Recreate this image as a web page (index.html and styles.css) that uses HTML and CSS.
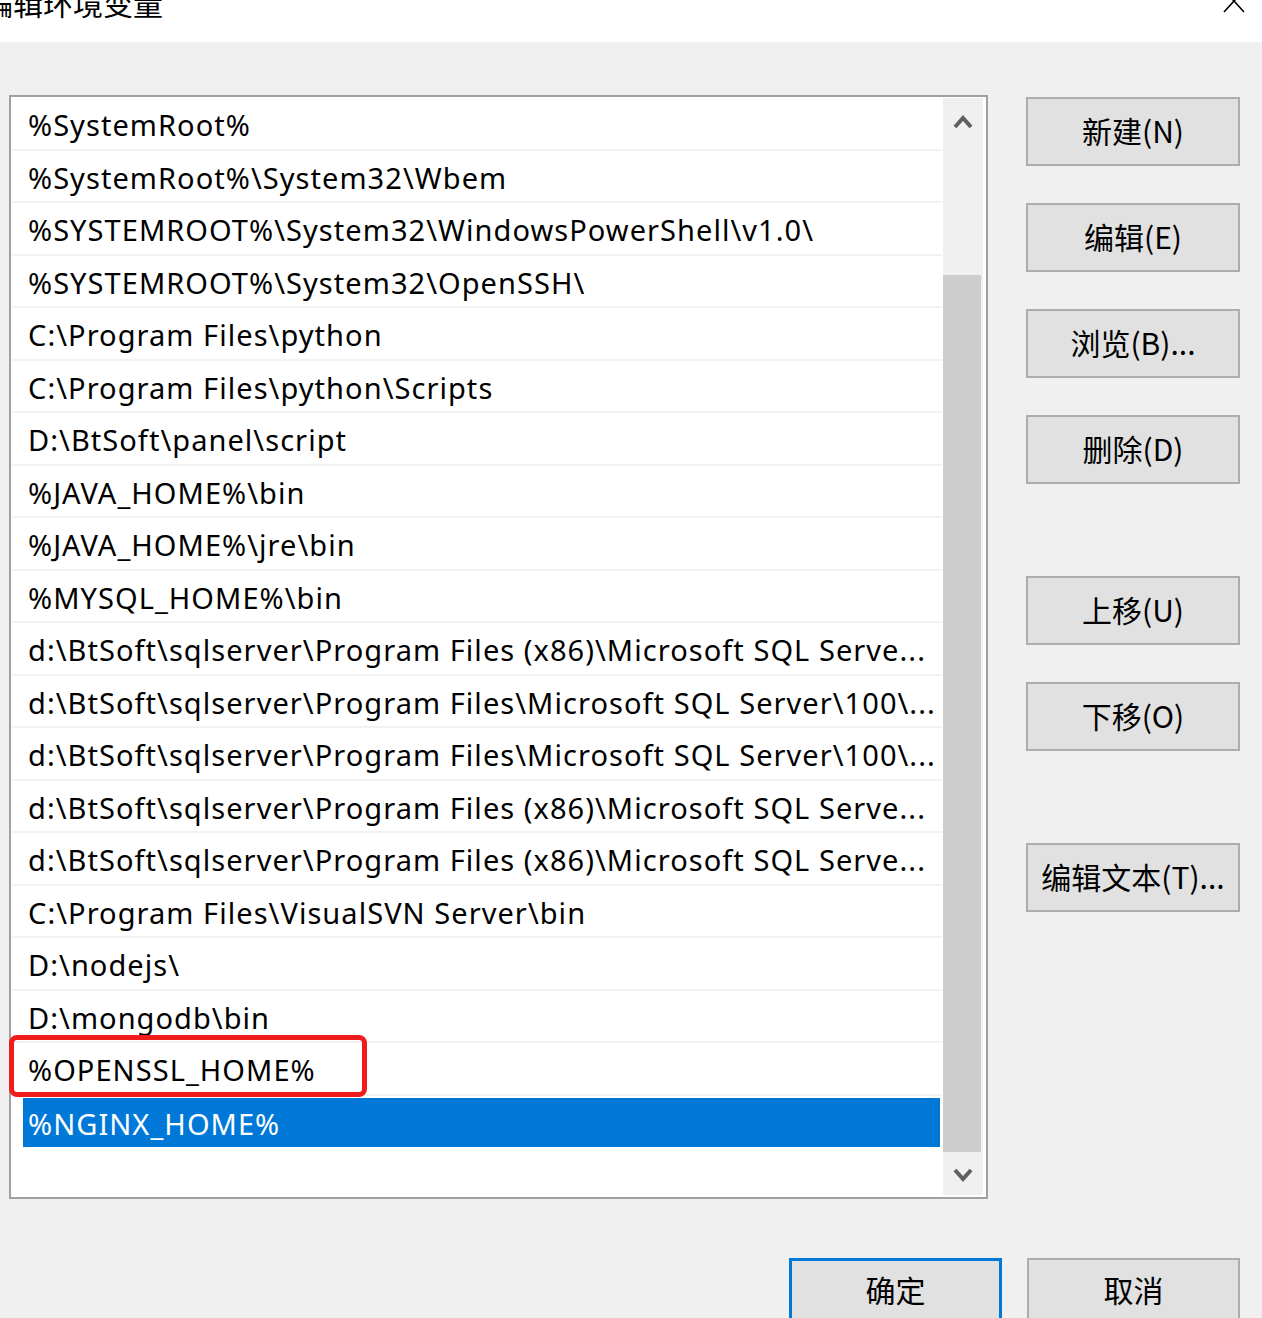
FILE: index.html
```html
<!DOCTYPE html>
<html>
<head lang="zh">
    <meta charset="UTF-8">
    <title>编辑环境变量</title>
    <link rel="stylesheet" href="styles.css">
</head>
<body>
<div class="titlebar">
    <span class="title">编辑环境变量</span>
    <svg class="close" width="22" height="24" viewBox="0 0 22 24">
        <path d="M1 1 L21 23 M21 1 L1 23" stroke="#000" stroke-width="1.6" fill="none"/>
    </svg>
</div>

<div class="main">
    <div class="listbox">
        <ul class="rows">
            <li>%SystemRoot%</li>
            <li>%SystemRoot%\System32\Wbem</li>
            <li>%SYSTEMROOT%\System32\WindowsPowerShell\v1.0\</li>
            <li>%SYSTEMROOT%\System32\OpenSSH\</li>
            <li>C:\Program Files\python</li>
            <li>C:\Program Files\python\Scripts</li>
            <li>D:\BtSoft\panel\script</li>
            <li>%JAVA_HOME%\bin</li>
            <li>%JAVA_HOME%\jre\bin</li>
            <li>%MYSQL_HOME%\bin</li>
            <li>d:\BtSoft\sqlserver\Program Files (x86)\Microsoft SQL Serve...</li>
            <li>d:\BtSoft\sqlserver\Program Files\Microsoft SQL Server\100\...</li>
            <li>d:\BtSoft\sqlserver\Program Files\Microsoft SQL Server\100\...</li>
            <li>d:\BtSoft\sqlserver\Program Files (x86)\Microsoft SQL Serve...</li>
            <li>d:\BtSoft\sqlserver\Program Files (x86)\Microsoft SQL Serve...</li>
            <li>C:\Program Files\VisualSVN Server\bin</li>
            <li>D:\nodejs\</li>
            <li>D:\mongodb\bin</li>
            <li class="marked">%OPENSSL_HOME%<span class="mark"></span></li>
            <li class="selected"><span>%NGINX_HOME%</span></li>
        </ul>
        <div class="scrollbar">
            <div class="sb-btn up">
                <svg width="20" height="14" viewBox="0 0 20 14"><polyline points="2,12 10,3 18,12" stroke="#606060" stroke-width="4" fill="none"/></svg>
            </div>
            <div class="sb-track"><div class="sb-thumb"></div></div>
            <div class="sb-btn down">
                <svg width="20" height="14" viewBox="0 0 20 14"><polyline points="2,2 10,11 18,2" stroke="#606060" stroke-width="4" fill="none"/></svg>
            </div>
        </div>
    </div>

    <div class="side">
        <button class="btn">新建(N)</button>
        <button class="btn">编辑(E)</button>
        <button class="btn">浏览(B)...</button>
        <button class="btn">删除(D)</button>
        <button class="btn sep">上移(U)</button>
        <button class="btn">下移(O)</button>
        <button class="btn sep">编辑文本(T)...</button>
    </div>
</div>

<div class="footer">
    <button class="btn default">确定</button>
    <button class="btn">取消</button>
</div>
</body>
</html>
```

FILE: styles.css
```css
* {
    margin: 0;
    padding: 0;
    box-sizing: border-box;
}

ul {
    list-style: none;
}

body {
    background-color: #f0f0f0;
    font-family: "Noto Sans", "Noto Sans CJK SC", sans-serif;
    color: #000;
    overflow: hidden;
}

.titlebar {
    height: 42px;
    background-color: #fff;
    display: flex;
    justify-content: space-between;
    overflow: hidden;
}

.title {
    font: 30px/30px "Noto Sans CJK SC", sans-serif;
    margin-top: -13px;
    margin-left: -17px;
}

.close {
    margin-top: -11px;
    margin-right: 17px;
}

.main {
    display: flex;
    padding: 53px 0 0 9px;
}

.listbox {
    width: 979px;
    height: 1104px;
    border: 2px solid #a0a0a0;
    background-color: #fff;
    display: flex;
    padding: 1px 3px 2px 1px;
}

.rows {
    width: 930px;
    margin-right: 1px;
}

.rows li {
    position: relative;
    height: 52.5px;
    line-height: 48px;
    padding: 3px 0 0 16px;
    font-size: 29px;
    letter-spacing: 1.05px;
    white-space: nowrap;
    border-bottom: 2px solid #f2f2f2;
}

.rows li.selected {
    border-bottom: none;
    padding: 2.5px 2px 1px 11px;
}

.selected span {
    display: block;
    height: 49px;
    line-height: 51px;
    padding-left: 5px;
    background-color: #0078d7;
    color: #fff;
}

/* red annotation frame round one entry */
.mark {
    position: absolute;
    left: -3px;
    top: -8px;
    width: 358px;
    height: 62px;
    border: 5px solid #f01c1c;
    border-radius: 8px;
}

.scrollbar {
    width: 40px;
    display: flex;
    flex-direction: column;
    background-color: #f0f0f0;
}

.sb-btn {
    height: 42px;
    display: flex;
    align-items: center;
    justify-content: center;
}

.sb-btn.up {
    padding-top: 6px;
}

.sb-btn.down {
    height: 43px;
    padding-top: 3px;
}

.sb-track {
    flex: 1;
    display: flex;
    flex-direction: column;
    padding: 135px 2px 0 0;
}

.sb-thumb {
    flex: 1;
    background-color: #cdcdcd;
}

.side {
    display: flex;
    flex-direction: column;
    gap: 37px;
    margin-left: 38px;
    padding-top: 2px;
}

.btn {
    width: 214px;
    height: 69px;
    border: 2px solid #adadad;
    background-color: #e1e1e1;
    font: 30px "Noto Sans CJK SC", sans-serif;
    color: #000;
    padding-bottom: 4px;
}

.side .sep {
    margin-top: 55px;
}

.footer {
    display: flex;
    justify-content: flex-end;
    gap: 25px;
    padding: 59px 22px 0 0;
}

.footer .btn {
    width: 213px;
    padding-bottom: 8px;
}

.btn.default {
    border: 3px solid #0078d7;
}
```
